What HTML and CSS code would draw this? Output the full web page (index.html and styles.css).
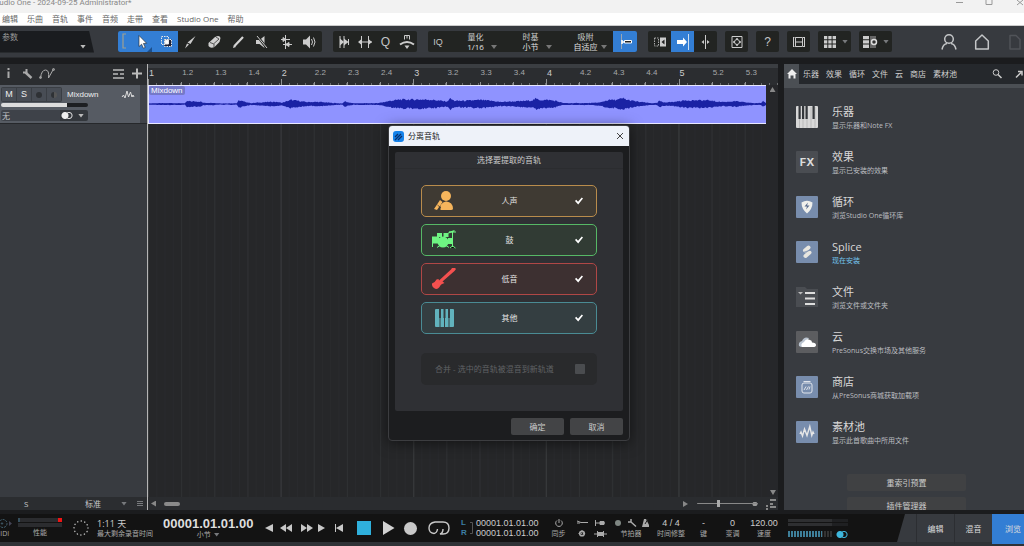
FILE: index.html
```html
<!DOCTYPE html>
<html lang="zh-CN">
<head>
<meta charset="utf-8">
<title>Studio One - 2024-09-25 Administrator*</title>
<link rel="stylesheet" href="styles.css">
</head>
<body>
<header class="titlebar">
  <span class="window-title">Studio One - 2024-09-25 Administrator*</span>
  <svg class="window-controls" viewBox="0 0 68 12" width="68" height="12" fill="none" stroke="#999"><path d="M0 2.500h7M30 -1v5.500h6V-1M61 0l6 5M67 0l-6 5"/></svg>
</header>
<nav class="menubar">
  <a href="#">编辑</a><a href="#">乐曲</a><a href="#">音轨</a><a href="#">事件</a><a href="#">音频</a><a href="#">走带</a><a href="#">查看</a><a href="#">Studio One</a><a href="#">帮助</a>
</nav>

<div class="toolbar">
  <button class="params"><span>参数</span><i class="caret"></i></button>
  <div class="group tools">
    <span class="bracket on"><svg width="12" height="20" viewBox="0 0 12 20" fill="none" stroke="#a0a090" stroke-width="1.200"><path d="M8 3H5v14h3"/></svg></span>
    <button class="tool on" aria-label="箭头"><svg viewBox="0 0 24 20"><path fill="#fff" stroke="#222" stroke-width=".6" d="M9 3.500v11l2.600-2.300 1.800 4 1.800-.8-1.800-3.900 3.200-.2z"/><path fill="#1b4f8c" d="M22 15v5h-5z"/></svg></button>
    <button class="tool on" aria-label="范围"><svg viewBox="0 0 24 20" fill="none" stroke="#e8e8e8"><path stroke-dasharray="1.500 1" d="M7.500 4.500h7v8h-7z"/><path fill="#223" d="M10.500 7.500h7v7h-7z" stroke-dasharray="1.500 1"/><path d="M11 8h3.500v4H11z" fill="#fff"/></svg></button>
    <button class="tool" aria-label="分割"><svg viewBox="0 0 24 20"><path fill="#ccc" d="M17.500 4l-5 8-3-1.500zM9 11.500l2 1-4 4z"/></svg></button>
    <button class="tool" aria-label="橡皮"><svg viewBox="0 0 24 20"><path fill="#d0d0d0" d="M12.500 5.500q5-3 6 .5l-1 4-5 5q-4 2-6-1V11z"/><path d="M8 10.500l4 1.500v3M14 5l3 2-5 4.500" stroke="#333" fill="none" stroke-width=".8"/></svg></button>
    <button class="tool" aria-label="绘制"><svg viewBox="0 0 24 20"><path stroke="#d5d5d5" stroke-width="2.200" d="M8.500 14L17 5"/><path fill="#d5d5d5" d="M7 16l.8-3 2.200 2z"/></svg></button>
    <button class="tool" aria-label="静音"><svg viewBox="0 0 24 20"><path fill="#ccc" d="M6 8h3.500l5-4v12l-5-4H6z"/><path stroke="#222422" stroke-width="2.400" d="M7 3.500l10 13"/><path stroke="#ccc" d="M7 4l10 12"/></svg></button>
    <button class="tool" aria-label="弯曲"><svg viewBox="0 0 24 20" fill="none" stroke="#ccc"><path d="M11.500 3v14M7 7.500h9M9 12.500h9"/><path fill="#ccc" d="M9 5.500l2.500 2L9 9.500zM15 10.500l-3.500 2 3.500 2z"/></svg></button>
    <button class="tool" aria-label="试听"><svg viewBox="0 0 24 20"><path fill="#ccc" d="M5 7.500h3l4-4v13l-4-4H5z"/><path stroke="#ccc" fill="none" d="M13.500 7q2 3 0 6M15.500 5.500q3 4.500 0 9"/></svg></button>
  </div>
  <div class="group narrow">
    <button class="tool" aria-label="剪切静音"><svg viewBox="0 0 24 20"><path stroke="#ccc" d="M8 4v12M12 4v12M16.500 7v6"/><path fill="#ccc" d="M8 6.500l4 3.500-4 3.500zM12 6.500l4.500 3.500-4.500 3.500z"/></svg></button>
    <button class="tool" aria-label="音频弯曲"><svg viewBox="0 0 24 20"><path stroke="#ccc" d="M8.500 4v12M15.500 4v12M6 10h13" fill="none"/><path fill="#ccc" d="M8 7.500v5L5 10zM16 7.500v5l3-2.500z"/></svg></button>
    <button class="tool glyph">Q</button>
    <button class="tool" aria-label="宏"><svg viewBox="0 0 24 20"><path fill="none" stroke="#ccc" stroke-width="2" d="M5 12.500Q12 7.500 19 12.500"/><path fill="none" stroke="#ccc" d="M9.500 7.500v-4h5v4M12 3.500v3"/><path fill="#ccc" d="M9.500 13.500h5L12 17z"/></svg></button>
  </div>
  <div class="group quant">
    <button class="iq">IQ</button>
    <label class="pick"><span>量化</span><select><option>1/16</option></select><i class="caret"></i></label>
    <label class="pick"><span>时基</span><select><option>小节</option></select><i class="caret"></i></label>
    <label class="pick"><span>吸附</span><select><option>自适应</option></select><i class="caret"></i></label>
    <button class="tool on" aria-label="吸附开关"><svg viewBox="0 0 24 20"><path stroke="#99a6b5" d="M8.500 2v15"/><path fill="none" stroke="#fff" stroke-width="1.500" d="M9 8v4M9 10h3"/><path fill="#222" stroke="#fff" d="M11.500 8.500h7v2.500h-7z"/></svg></button>
  </div>
  <div class="group follow">
    <button class="tool" aria-label="自动滚动"><svg viewBox="0 0 24 20"><path fill="none" stroke="#aaa" stroke-dasharray="1.500 1" d="M6.500 6h4v8h-4z"/><path fill="#ccc" d="M12 5.500h6v9h-6z"/><path fill="#222" d="M16.500 7.500v5L13.500 10z"/></svg></button>
    <button class="tool on" aria-label="光标跟随"><svg viewBox="0 0 24 20"><path fill="#fff" d="M6 8h6V5.500l4 4.500-4 4.500V12H6z"/><path stroke="#cde" d="M17.500 2v16"/></svg></button>
    <button class="tool" aria-label="居中"><svg viewBox="0 0 24 20"><path stroke="#ccc" d="M11.500 3v14"/><path fill="#ccc" d="M10 8v4l-2.500-2zM13 8v4l2.500-2z"/></svg></button>
  </div>
  <button class="group tool single" aria-label="聚焦"><svg viewBox="0 0 24 20" fill="none" stroke="#ccc"><path d="M7 4.500h10v11H7z"/><circle cx="12" cy="10" r="2.500"/><path stroke-width="1.500" d="M12 6v2M12 12v2M8 10h2M14 10h2"/></svg></button>
  <button class="group tool single glyph">?</button>
  <button class="group tool single" aria-label="视频"><svg viewBox="0 0 24 20" fill="none" stroke="#ccc"><path d="M8.500 5.500h7v9h-7zM8 10h8M6.500 5v10M17.500 5v10"/><path d="M6 5.500h12M6 14.500h12" stroke-dasharray="1.500 1"/></svg></button>
  <button class="group wide" aria-label="网格"><svg viewBox="0 0 24 20" fill="#ccc"><path d="M6 4h3.300v3.300H6zM10.300 4h3.300v3.300h-3.300zM14.600 4H18v3.300h-3.400zM6 8.300h3.300v3.300H6zM10.300 8.300h3.300v3.300h-3.300zM14.600 8.300H18v3.300h-3.400zM6 12.600h3.300V16H6zM10.300 12.600h3.300V16h-3.300zM14.600 12.600H18V16h-3.400z"/></svg><i class="caret dim"></i></button>
  <button class="group wide" aria-label="视图选项"><svg viewBox="0 0 24 20" fill="#ccc"><path d="M4 4h6v3.300H4zM4 8.300h6v3.300H4zM4 12.600h6V16H4z"/><path fill="#666" d="M11 4h6v12h-6z"/><circle cx="15" cy="10" r="2.500" fill="#333" stroke="#ddd" stroke-width="1.500"/></svg><i class="caret dim"></i></button>
  <div class="account">
    <svg viewBox="0 0 18 20" fill="none" stroke="#c4c6c8" stroke-width="1.500"><circle cx="9" cy="7" r="4.300"/><path d="M2 17.500q1-5.500 5-6M16 17.500q-1-5.500-5-6"/></svg>
    <svg viewBox="0 0 18 20" fill="none" stroke="#c4c6c8" stroke-width="1.500" stroke-linejoin="round"><path d="M9 3l6.300 6v8H2.700V9z"/></svg>
    <svg viewBox="0 0 18 20" fill="none" stroke="#505358" stroke-width="1.500" stroke-linejoin="round"><path d="M4 3.500h6l4 4v9.500H4z"/></svg>
  </div>
</div>

<main class="workspace">
  <section class="tracks">
    <div class="track-tools">
      <svg width="60" height="20" viewBox="0 0 60 20" fill="none" stroke="#aaa"><path stroke-width="2" d="M8.500 7.500v6.500M8.500 4v2"/><path stroke-width="2.400" d="M25.500 8.500l6 5.500"/><path stroke-width="2" d="M23 8.500h3.500V5"/><path d="M40.500 14q1-8 5-8t3 8l5-9"/><circle cx="40.500" cy="13.500" r="1"/><circle cx="53.500" cy="5.500" r="1"/></svg>
      <svg width="36" height="20" viewBox="0 0 36 20" stroke="#bbb"><path d="M2 6h11M2 10h5M9 10h4M2 14h11" stroke-width="1.500"/><path d="M21 9.500h10M26 4.500v10" stroke-width="2"/></svg>
    </div>
    <article class="track">
      <div class="track-row">
        <div class="buttons"><button>M</button><button>S</button><button aria-label="录音"><i class="dot"></i></button><button aria-label="监听"><i class="dot half"></i></button></div>
        <span class="track-name">Mixdown</span>
        <svg width="14" height="10" viewBox="0 0 14 10" fill="none" stroke="#ddd"><path d="M1 7l1.500-2L4 8l2-7 1.500 6L9.500 2l1.500 5 1-2 1 2"/></svg>
      </div>
      <input class="volume" type="range" aria-label="音量" value="76">
      <div class="output"><span>无</span><i class="stereo"></i><i class="caret"></i></div>
    </article>
    <div class="track-footer"><span>S</span><span class="size">标准</span><i class="caret dim"></i><i class="lines"></i></div>
  </section>

  <section class="timeline">
    <div class="ruler" id="ruler"></div>
    <div class="arrange">
      <div class="clip"><span>Mixdown</span><svg viewBox="0 0 618 38" preserveAspectRatio="none"><path id="wave" fill="#1a22a4"/></svg></div>
      <div class="vscroll"><i class="up"></i><i class="down"></i></div>
    </div>
    <div class="hscroll"><i class="left"></i><i class="thumb"></i><i class="right"></i><input type="range" aria-label="缩放" value="35"><svg width="14" height="12" viewBox="0 0 14 12" fill="#888"><path d="M2 7h2v2H2zM6 5h3v2H6zM2 10h2v2H2zM6 1h6v2H6zM6 8h6v2H6z"/></svg></div>
  </section>

  <aside class="browser">
    <nav class="tabs">
      <a class="home" href="#" aria-label="主页"><svg width="10" height="10" viewBox="0 0 10 10" fill="#eee"><path d="M5 0l5 5H8.500v4.500h-2v-3h-3v3h-2V5H0z"/></svg></a>
      <a href="#">乐器</a><a href="#">效果</a><a href="#">循环</a><a href="#">文件</a><a href="#">云</a><a href="#">商店</a><a href="#">素材池</a>
      <svg class="search" width="34" height="12" viewBox="0 0 34 12" fill="none" stroke="#ccc"><circle cx="6" cy="4.500" r="2.800"/><path stroke-width="1.500" d="M8 6.500l3.500 3.500M26 9.500L31 4.500M28 3.500h4v4"/></svg>
    </nav>
    <div class="browser-body">
      <a class="item" href="#"><svg viewBox="0 0 22 22"><rect width="22" height="22" rx="1" fill="#d8d8d8"/><path stroke="#aaa" stroke-width=".6" d="M3.500 1v21M7 1v21M11 1v21M15 1v21M19 1v21"/><path fill="#34373b" d="M2.500 0h2.200v13H2.500zM6 0h2.200v13H6zM9.500 0h2.200v13H9.500zM16.500 0h2.200v13h-2.200z"/></svg><span><b>乐器</b><small>显示乐器和Note FX</small></span></a>
      <a class="item" href="#"><i class="fx">FX</i><span><b>效果</b><small>显示已安装的效果</small></span></a>
      <a class="item" href="#"><svg viewBox="0 0 22 22"><rect width="22" height="22" rx="1" fill="#788dad"/><path fill="#f0f0ec" d="M5.500 6.500Q11 3 16.500 6.500 16.500 13 11 17.500 5.500 13 5.500 6.500z"/><path fill="#53678a" d="M12 6.500l-3.500 4H11L10 13.500l3.500-4H11z"/></svg><span><b>循环</b><small>浏览Studio One循环库</small></span></a>
      <a class="item splice" href="#"><svg viewBox="0 0 22 22"><rect width="22" height="22" rx="1" fill="#788dad"/><g stroke="#e8e6df" stroke-width="4" stroke-linecap="round"><path d="M9 9.500L12.500 6.500M9.500 15L13.500 11.500"/></g><path stroke="#788dad" stroke-width=".8" d="M7 11.500l8-2.500"/></svg><span><b>Splice</b><small>现在安装</small></span></a>
      <a class="item" href="#"><svg viewBox="0 0 22 22"><path fill="#4a4d52" d="M0 1h9l2 2h11v18H0z"/><path fill="#bbb" d="M2 6h5L4.500 8.500z"/><path stroke="#ddd" stroke-width="2" d="M9 7h10M9 12.500h10M9 18h10"/></svg><span><b>文件</b><small>浏览文件或文件夹</small></span></a>
      <a class="item" href="#"><svg viewBox="0 0 22 22"><rect width="22" height="22" rx="1" fill="#5c5d60"/><path fill="#b9c3cf" d="M3 15q-1-4 3-5 2-5 7-3l-6 9H5z"/><path fill="#fff" d="M6 16q-2-3 2-5 2-4 6-2 2 0 2 2.500 4 0 4 2.500 0 2-3 2z"/></svg><span><b>云</b><small>PreSonus交换市场及其他服务</small></span></a>
      <a class="item" href="#"><svg viewBox="0 0 22 22" fill="none" stroke="#dfe3ea"><rect width="22" height="22" rx="1" fill="#788dad" stroke="none"/><rect x="6" y="7" width="10" height="10" rx="2"/><path d="M7.500 5.500h7M8 14l2-3.500M10.500 14l2-3.500M13 13.500l1-3"/></svg><span><b>商店</b><small>从PreSonus商城获取加载项</small></span></a>
      <a class="item" href="#"><svg viewBox="0 0 22 22" fill="none" stroke="#e6e6e6" stroke-width="1.400"><rect width="22" height="22" rx="1" fill="#788dad" stroke="none"/><path d="M4 13l1-2 1.500 4 2-7 2.500 6.500 2.800-9 2 9 1.200-3.500 1 2"/></svg><span><b>素材池</b><small>显示此首歌曲中所用文件</small></span></a>
      <div class="actions"><button>重索引预置</button><button>插件管理器</button></div>
    </div>
  </aside>
</main>

<footer class="transport">
  <div class="dock">
    <div class="midi"><svg width="12" height="11" viewBox="0 0 12 11" fill="none" stroke="#456373"><circle cx="3" cy="5.500" r="4" stroke-dasharray="2 1"/><circle cx="2" cy="5.500" r=".7"/><path fill="#445" stroke="none" d="M9 3l3 2.500L9 8z"/></svg><small>MIDI</small></div>
    <div class="perf"><i class="bar hot"></i><i class="bar"></i><small>性能</small></div>
    <svg class="ring" viewBox="0 0 18 18" fill="none" stroke="#bbb" stroke-width="1.500" stroke-linecap="round"><circle cx="9" cy="9" r="7" stroke-dasharray="0.100 3.565"/></svg>
    <div class="remain"><b>1:11 天</b><small>最大剩余录音时间</small></div>
    <div class="clock"><b>00001.01.01.00</b><small>小节 <i class="caret dim"></i></small></div>
    <svg class="moves" viewBox="0 0 80 16" width="80" height="16" fill="#c8c8c8"><path d="M8 4v8L0 8zM21 4v8l-6-4zM27 4v8l-6-4zM36 4v8l6-4zM42 4v8l6-4zM53 4v8l7-4zM78 4v8l-7-4zM70 4h1v8h-1z"/></svg>
    <button class="stop" aria-label="停止"></button>
    <button aria-label="播放"><svg width="12" height="14" viewBox="0 0 12 14" fill="#d2d2d2"><path d="M0 0l11.500 7L0 14z"/></svg></button>
    <button class="record" aria-label="录音"></button>
    <button aria-label="循环"><svg width="22" height="16" viewBox="0 0 22 16" fill="none" stroke="#c8c8c8" stroke-width="1.400"><path d="M6 13.500Q1 13 1 8T7 2h8q6 0 6 6t-6 6h-3q3-1 3-5M6 13.500q3-.5 3.500-4.500"/></svg></button>
    <div class="locators">
      <div><em>L</em><em>R</em></div>
      <svg width="3" height="14" viewBox="0 0 3 14" fill="none" stroke="#555"><path d="M0 1.500h2.500v11H0"/></svg>
      <div><span>00001.01.01.00</span><span>00001.01.01.00</span></div>
    </div>
    <div class="cell"><svg width="12" height="10" viewBox="0 0 12 10" fill="none" stroke="#aaa"><path d="M4 2.500a3.300 3.300 0 1 0 4 0M6 1v4"/></svg><small>同步</small></div>
    <svg class="misc" width="36" height="22" viewBox="0 0 36 22" fill="none" stroke="#aaa"><path d="M1 4l4 1.500h7M1 6h3M19.500 3v6M20 6h9"/><path fill="#aaa" d="M24 4.500h4v3h-4zM22 15.500h5v3h-5z"/><circle cx="6" cy="16.500" r="2.300" stroke-width="1.600"/><path stroke-dasharray="1 1.300" d="M6 13v7M2.500 16.500h7"/><path d="M18 17h13M21.500 14v6M27.500 14v6"/></svg>
    <div class="cell metro"><svg width="36" height="10" viewBox="0 0 36 10"><circle cx="5" cy="5" r="3" fill="#7f8783"/><path stroke="#aaa" stroke-width="1.500" fill="none" d="M15 4h3V1M18 4l5 4.500"/><path fill="#aaa" d="M31 1h2l4 8h-8z"/><path stroke="#222" d="M32 6l3-5"/></svg><small>节拍器</small></div>
    <div class="cell meter"><b>4 / 4</b><small>时间修整</small></div>
    <div class="cell"><b>-</b><small>键</small></div>
    <div class="cell"><b>0</b><small>变调</small></div>
    <div class="cell tempo"><b>120.00</b><small>速度</small></div>
    <div class="levels"><i class="bar"></i><i class="bar"></i><div><i class="ticks"></i><i class="stereo blue"></i></div></div>
  </div>
  <nav class="views"><a href="#">编辑</a><a href="#">混音</a><a class="current" href="#">浏览</a></nav>
</footer>

<section class="dialog" role="dialog" aria-labelledby="dlg-title">
  <header><svg width="11" height="11" viewBox="0 0 11 11"><rect width="11" height="11" rx="3" fill="#1683ea"/><path stroke="#0a2f6b" stroke-width="1.300" d="M2 6l3-3M2 9l6-6M5 9l4-4" fill="none"/></svg><h1 id="dlg-title">分离音轨</h1><button aria-label="关闭"><svg width="8" height="8" viewBox="0 0 8 8" stroke="#444"><path d="M1 1l6 6M7 1L1 7"/></svg></button></header>
  <div class="panel">
    <h2>选择要提取的音轨</h2>
    <div class="stems">
      <label class="stem vocal"><svg viewBox="0 0 24 22"><circle cx="14" cy="6" r="5" fill="currentColor"/><path fill="currentColor" d="M8.500 20v-5q3-4 6-3.500 6 .5 6.500 7 0 1.500-2 1.500zM2 19l6-9 2.500 2L5 20z"/><path stroke="#3f3a33" stroke-width=".8" d="M5.500 15l3.500 3"/></svg><span>人声</span><input type="checkbox" checked></label>
      <label class="stem drums"><svg viewBox="0 0 24 22"><g fill="currentColor"><path d="M0 7.500h7v7H0zM5 4h5v4H5zM11.500 4h5v4h-5zM16 9h5v6h-5zM16.500 3l6-2v1.500l-6 2z"/><circle cx="11" cy="13" r="5.500"/></g><path stroke="currentColor" d="M20.500 2v16M18 19l2.500-2 3 2M.5 14v4M5 18.500l3-2M17 18.500l-3-2M17 3h7"/></svg><span>鼓</span><input type="checkbox" checked></label>
      <label class="stem bass"><svg viewBox="0 0 24 22"><path fill="currentColor" d="M0 15.500q3-1 4.500-4l2-.5.500 1.500L19 1.500 20 0h3l1 1-1.500 2-12 10.500 2 1.500q-4 1-5 4-2.500 3.500-5.500 1-2.500-2-2-5z"/></svg><span>低音</span><input type="checkbox" checked></label>
      <label class="stem other"><svg viewBox="0 0 24 22"><rect x="3" y="2" width="19" height="18" rx="1" fill="currentColor"/><path fill="#343e41" d="M7 2h2v9H7zM11.500 2h2v9h-2zM16 2h2v9h-2z"/><path stroke="#343e41" d="M8 11v9M12.500 11v9M17 11v9"/></svg><span>其他</span><input type="checkbox" checked></label>
    </div>
    <label class="merge"><span>合并 - 选中的音轨被混音到新轨道</span><input type="checkbox" disabled></label>
  </div>
  <div class="dialog-actions"><button>确定</button><button>取消</button></div>
</section>
<script src="app.js"></script>
</body>
</html>
```
FILE: styles.css
```css
* { box-sizing: border-box; }
body {
  margin: 0;
  height: 100vh;
  display: flex;
  flex-direction: column;
  overflow: hidden;
  position: relative;
  background: #1b1c1e;
  color: #c4c6c8;
  font: 8px/10px "Open Sans", "Noto Sans CJK SC", sans-serif;
}
a { color: inherit; text-decoration: none; }
button, select, input { font: inherit; color: inherit; }
button { border: 0; padding: 0; background: none; display: flex; align-items: center; justify-content: center; }
svg { display: block; flex: none; }
i, em { font-style: normal; flex: none; }
small { font-size: 7px; white-space: nowrap; }
b { font-weight: 400; white-space: nowrap; }
.caret { width: 6px; height: 4px; background: #bbb; clip-path: polygon(0 0, 100% 0, 50% 100%); }
.caret.dim { background: #77797c; }
.stereo { width: 12px; height: 7px; background: radial-gradient(circle at 4px 50%, #eee 3px, transparent 4px), radial-gradient(circle at 8px 50%, transparent 2px, #ddd 3px, transparent 4px); }
.stereo.blue { background: radial-gradient(circle at 4px 50%, #3eb7dd 3px, transparent 4px), radial-gradient(circle at 8px 50%, transparent 2px, #3eb7dd 3px, transparent 4px); }

.titlebar { flex: none; height: 13px; display: flex; justify-content: space-between; background: #f2f2f2; color: #888; overflow: hidden; }
.window-title { font: 8px/6px Roboto, sans-serif; margin-left: -8px; white-space: nowrap; }
.menubar { flex: none; height: 13px; display: flex; align-items: center; gap: 9px; padding-left: 2px; background: #fff; color: #666; border-bottom: 1px solid #ccc; }

.toolbar { flex: none; height: 32px; display: flex; align-items: center; gap: 8px; background: #373a3f; border-bottom: 1px solid #2a2c2f; }
.params { width: 94px; height: 22px; padding: 1px 8px 2px 2px; justify-content: space-between; align-items: flex-start; background: #1a1c1f; color: #999; clip-path: polygon(0 0, 89px 0, 100% 100%, 0 100%); }
.params .caret { align-self: flex-end; margin-bottom: 2px; }
.group { height: 21px; display: flex; flex: none; background: #222422; border-radius: 2px; overflow: hidden; }
.tools { margin-left: 16px; margin-right: 3px; }
.bracket { width: 12px; }
.tool { width: 24px; height: 21px; flex: none; }
.tool svg, .wide svg { width: 24px; height: 20px; }
.narrow .tool { width: 21px; }
.narrow { margin-right: 3px; }
.follow .tool, .single { width: 23px; }
.on { background: #337ed4; }
.glyph { font: 12px/20px "Liberation Sans", sans-serif; }
.quant { margin-right: 3px; }
.iq { width: 20px; font: 9px/20px "Liberation Sans", sans-serif; }
.pick { position: relative; width: 55px; padding: 1px 0; display: flex; flex-direction: column; align-items: center; color: #ccc; }
.pick select { appearance: none; border: 0; padding: 0; margin: 0; width: 100%; height: 10px; background: none; text-align: center; text-align-last: center; color: #e0e0e0; }
.pick .caret { position: absolute; right: 6px; bottom: 3px; background: #777; }
.wide { width: 33px; align-items: center; }
.wide .caret { margin-right: 3px; }
.account { flex: 1; display: flex; justify-content: flex-end; gap: 15px; overflow: hidden; }
.account svg { width: 18px; height: 20px; }

.workspace { flex: 1; min-height: 0; display: flex; padding-top: 6px; padding-bottom: 4px; }
.tracks { width: 148px; flex: none; display: flex; flex-direction: column; background: #383b40; border-right: 1px solid #b5b5b5; }
.track-tools { height: 21px; flex: none; display: flex; justify-content: space-between; background: #2b2d30; }
.track { height: 39px; flex: none; padding: 1px 19px 1px 1px; background: linear-gradient(90deg, #565b63 140px, #404349 140px); border-bottom: 1px solid #26282b; }
.track-row { display: flex; align-items: center; gap: 4px; height: 17px; color: #eee; margin-right: -12px; padding-right: 5px; }
.buttons { display: flex; gap: 1px; padding: 1px; margin-right: 1px; border-radius: 2px; background: #3a3e44; }
.buttons button { width: 14px; height: 13px; background: #484d55; font: 9px/13px "Liberation Sans", sans-serif; }
.track-name { flex: 1; font-family: "Liberation Sans", sans-serif; }
.dot { width: 6px; height: 6px; border-radius: 50%; background: #2e3135; }
.dot.half { background: linear-gradient(90deg, #2e3135 50%, #555 50%); }
input[type="range"] { appearance: none; margin: 0; height: 4px; border-radius: 2px; }
.volume { display: block; width: 87px; margin-top: 1px; background: linear-gradient(90deg, #ddd 76%, #1d1f22 76%); }
.volume::-webkit-slider-thumb { appearance: none; width: 1px; height: 1px; }
.output { display: flex; align-items: center; width: 87px; height: 11px; margin-top: 3px; padding: 0 4px 0 1px; gap: 5px; background: linear-gradient(90deg, #3e4249 59px, #33373c 59px); border-radius: 2px; }
.output span { flex: 1; }
.track-footer { height: 13px; margin-top: auto; display: flex; align-items: center; gap: 20px; padding: 0 4px 0 24px; background: #2b2d30; }
.track-footer .size { margin-left: auto; }
.track-footer i { margin-right: -10px; }
.track-footer .lines { width: 6px; height: 6px; margin-right: 0; background: repeating-linear-gradient(#77797c 0 1px, transparent 1px 2px); }

.timeline { flex: 1; min-width: 0; display: flex; flex-direction: column; background: #27282b; }
.ruler { height: 21px; flex: none; display: grid; grid-template-columns: repeat(19, 1fr); border-top: 4px solid #3b3e42; background: #2b2d30; overflow: hidden; }
.ruler span { padding-left: 1px; font: 8px/10px "Liberation Sans", sans-serif; color: #a6a8aa; background: linear-gradient(#909294, #909294) 0 100% / 1px 3px no-repeat, repeating-linear-gradient(90deg, #6a6c6e 0 1px, transparent 1px 8px) 0 100% / 100% 2px no-repeat; }
.ruler .bar-start { font-size: 9px; color: #ccc; background-size: 1px 6px, 100% 2px; }
.arrange {
  flex: 1;
  position: relative;
  background:
    linear-gradient(90deg, #37393b 1px, transparent 1px) 0 0 / calc(100% * 4 / 19) 100%,
    linear-gradient(90deg, #2f3133 1px, transparent 1px) 0 0 / calc(100% / 19) 100%,
    linear-gradient(90deg, #292a2d 1px, transparent 1px) 0 0 / calc(100% / 76) 100%,
    #262729;
}
.clip { height: 39px; margin-right: 12px; display: grid; background: #8f93ff; border: 1px solid #e8e8ff; border-width: 1px 0 1px 1px; }
.clip span, .clip svg { grid-area: 1 / 1; }
.clip span { justify-self: start; align-self: start; padding: 0 2px; font: 8px/9px "Liberation Sans", sans-serif; color: #fff; background: #7579c9; border-radius: 2px; }
.clip svg { width: 100%; height: 37px; }
.vscroll { position: absolute; top: 0; right: 0; bottom: 0; width: 11px; display: flex; flex-direction: column; align-items: center; justify-content: space-between; padding: 2px 0; background: #26272a; }
.up, .down { width: 6px; height: 5px; background: #888; clip-path: polygon(50% 0, 100% 100%, 0 100%); }
.down { transform: rotate(180deg); }
.hscroll { height: 13px; flex: none; display: flex; align-items: center; padding: 0 0 0 3px; background: #2a2c2f; }
.left, .right { width: 5px; height: 6px; background: #888; clip-path: polygon(100% 0, 100% 100%, 0 50%); }
.right { transform: rotate(180deg); margin-left: auto; margin-right: 9px; }
.thumb { width: 16px; height: 4px; margin-left: 8px; border-radius: 2px; background: #8a8a8a; }
.hscroll input { width: 61px; background: linear-gradient(#888, #888) 0 50% / 100% 1px no-repeat, radial-gradient(circle at 58px 50%, #999 2px, transparent 3px); }
.hscroll input::-webkit-slider-thumb { appearance: none; width: 3px; height: 7px; background: #aaa; }
.hscroll svg { margin-left: 6px; }

.browser { width: 241px; flex: none; margin-left: 5px; display: flex; flex-direction: column; background: #383b40; border-left: 1px solid #1b1c1e; overflow: hidden; }
.tabs { height: 20px; flex: none; display: flex; align-items: center; gap: 7px; background: #25282c; white-space: nowrap; }
.home { width: 15px; height: 20px; display: grid; place-items: center; background: #4b4f54; }
.tabs a + a { color: #d0d0d0; }
.home + a { margin-left: -3px; }
.search { margin-left: auto; }
.browser-body { flex: 1; min-height: 0; overflow: hidden; padding: 17px 58px 0 12px; border-top: 4px solid #4b4f54; }
.item { display: flex; gap: 14px; height: 45px; align-items: flex-start; }
.item > svg, .fx { width: 22px; height: 22px; margin-top: 1px; flex: none; }
.fx { display: grid; place-items: center; background: #4a4d52; border-radius: 1px; font: bold 11px/12px Inter, sans-serif; color: #ddd; }
.item span { display: flex; flex-direction: column; gap: 3px; }
.item b { font-size: 11px; line-height: 13px; color: #d8d8d8; }
.item small { line-height: 10px; color: #bcbec0; }
.item.splice small { color: #73c2ec; }
.actions { display: grid; gap: 6px; padding: 9px 0 0 51px; }
.actions button { height: 17px; background: #404143; border-radius: 2px; color: #ccc; }

.transport { height: 32px; flex: none; display: flex; background: #373a3f; border-bottom: 4px solid #2f3236; }
.dock { flex: 1; min-width: 0; height: 28px; display: flex; align-items: center; background: #131313; color: #aaa; clip-path: polygon(0 0, 100% 0, calc(100% - 8px) 100%, 0 100%); overflow: hidden; }
.dock > * { flex: none; }
.midi { width: 18px; display: flex; flex-direction: column; }
.midi small { margin-left: -6px; }
.perf { width: 44px; display: grid; gap: 1px; justify-items: center; }
.bar { width: 100%; height: 4px; background: #2b2c2f; }
.hot { background: linear-gradient(90deg, #37505e 2px, #2b2c2f 2px 40px, #f01414 40px); }
.ring { width: 18px; height: 18px; margin-left: 10px; }
.remain { display: grid; margin-left: 7px; width: 67px; }
.remain b { font-size: 9px; line-height: 11px; color: #ccc; }
.clock { width: 90px; margin-left: -1px; display: grid; justify-items: center; }
.clock b { font: bold 13px/13px "Liberation Sans", sans-serif; color: #ddd; }
.clock small { display: flex; align-items: center; gap: 3px; line-height: 9px; }
.moves { margin-left: 12px; }
.stop { width: 14px; height: 14px; margin: 0 12px 0 12px; background: #2fb0dc; }
.record { width: 13px; height: 13px; margin: 0 11px 0 9px; border-radius: 50%; background: #c8c8c8; }
.locators { display: flex; align-items: center; gap: 3px; margin-left: 11px; font: 9px/10px "Liberation Sans", sans-serif; color: #ccc; }
.locators div { display: grid; }
.locators em { width: 6px; font-size: 8px; font-weight: 700; color: #3d7fa6; }
.locators span { width: 60px; }
.cell { width: 29px; display: grid; gap: 1px; justify-items: center; }
.cell b { font: 9px/10px "Liberation Sans", sans-serif; color: #ccc; }
.locators + .cell { margin-left: 8px; }
.misc { margin-left: 3px; }
.metro { width: 38px; }
.meter { width: 42px; }
.meter + .cell { margin-left: -3px; }
.tempo { width: 34px; }
.levels { width: 60px; margin-left: 7px; display: grid; gap: 1px; }
.levels .bar { height: 3px; background: linear-gradient(90deg, #2e2f31 44px, #1f2022 44px); }
.levels div { display: flex; align-items: center; justify-content: space-between; margin-top: 4px; }
.ticks { width: 45px; height: 6px; background: repeating-linear-gradient(90deg, transparent 0 2px, #131313 2px 3px), linear-gradient(90deg, #3e7f99 34px, #333 34px); }
.views { display: flex; height: 30px; margin-left: 11px; }
.views a { width: 38px; display: grid; place-items: center; border-left: 1px solid #2c2e32; color: #ddd; }
.views .current { width: 32px; padding-left: 10px; background: #337ed4; border: 0; white-space: nowrap; overflow: hidden; }

.dialog { position: absolute; left: 388px; top: 125px; width: 242px; display: flex; flex-direction: column; background: #1c1d1f; border: 1px solid #3c3d40; border-radius: 4px; overflow: hidden; box-shadow: 0 2px 14px #0008; }
.dialog header { height: 20px; display: flex; align-items: center; gap: 4px; padding: 0 5px 0 4px; background: #eef2f9; color: #222; }
.dialog h1, .dialog h2 { margin: 0; font-size: 8px; font-weight: 400; }
.dialog header button { margin-left: auto; }
.panel { margin: 6px 6px 7px; padding-bottom: 26px; background: #2f3034; border-radius: 2px; }
.dialog h2 { height: 17px; display: grid; place-items: center; color: #ccc; border-bottom: 1px solid #2b2c2f; }
.stems { display: grid; gap: 7px; padding: 16px 26px 0; }
.stem { height: 32px; display: flex; align-items: center; justify-content: space-between; padding: 0 13px 0 10px; border: 1px solid currentColor; border-radius: 5px; }
.stem svg { width: 24px; height: 22px; }
.stem span { flex: 1; margin-right: 12px; color: #e4e4e4; text-align: center; }
.vocal { color: #f6b55c; border-color: #b98c4c; background: #3f3a33; }
.drums { color: #6ef582; border-color: #56b866; background: #313b34; }
.bass { color: #f4504f; border-color: #b04746; background: #3d3031; }
.other { color: #61b3bd; border-color: #4a8b94; background: #343e41; }
.dialog input { appearance: none; margin: 0; width: 10px; height: 10px; background: #4a4c4f; border-radius: 1px; }
.dialog input:checked { width: 8px; height: 8px; background: #fff; clip-path: polygon(0 50%, 15% 35%, 38% 60%, 85% 5%, 100% 20%, 40% 95%); }
.merge { height: 32px; display: flex; align-items: center; justify-content: space-between; margin: 19px 26px 0; padding: 0 12px 0 14px; border-radius: 5px; background: #292a2c; color: #606265; }
.dialog-actions { display: flex; justify-content: flex-end; gap: 6px; padding: 0 6px 5px; }
.dialog-actions button { width: 53px; height: 17px; background: #434446; border-radius: 2px; color: #ccc; }
```
FILE: app.js
```js
const ruler = document.getElementById("ruler");
for (let beat = 0; beat < 19; beat++) {
  const bar = Math.floor(beat / 4) + 1;
  const part = beat % 4;
  const mark = document.createElement("span");
  if (part === 0) mark.className = "bar-start";
  mark.textContent = part === 0 ? bar : bar + "." + (part + 1);
  ruler.append(mark);
}

// Peak levels of the clip as [position, level] pairs.
const peaks = [[0,.9],[23,1.2],[36,.9],[38,3.5],[52,3],[54,1.5],[65,1.5],[68,.9],[88,.9],[90,4.5],[95,3],[102,1.2],[113,2],[125,3],[133,1.5],[142,5],[149,4],[157,2.5],[172,2.5],[190,.9],[194,.9],[196,3.5],[200,1.8],[205,.9],[230,1.2],[242,4],[252,5.5],[280,5.5],[292,4],[299,3],[301,7],[306,4],[317,4],[332,5],[342,4],[352,2.5],[372,3.5],[384,4.5],[387,6.5],[392,5],[400,5],[407,4],[415,1.2],[442,1.2],[452,2],[460,5],[468,5],[475,7],[479,5],[492,2.5],[502,1.2],[509,1.2],[511,4],[515,2],[525,2.5],[537,4.5],[562,4.5],[568,3],[577,2.5],[587,3.5],[597,2],[606,1.2],[613,1.2],[615,4],[618,1]];
const level = x => {
  const n = peaks.findIndex(p => p[0] >= x);
  if (n < 1) return peaks[0][1];
  const [x0, a] = peaks[n - 1], [x1, b] = peaks[n];
  return a + (b - a) * (x - x0) / (x1 - x0);
};
const jitter = n => {
  const v = Math.sin(n * 12.9898) * 43758.5453;
  return .65 + .35 * (v - Math.floor(v));
};
const upper = [], lower = [];
for (let x = 0; x <= 618; x++) {
  const h = level(x);
  upper.push(x + " " + (18.5 - h * jitter(x)).toFixed(1));
  lower.unshift(x + " " + (18.5 + h * jitter(x + 900)).toFixed(1));
}
document.getElementById("wave").setAttribute("d", "M" + upper.concat(lower).join("L") + "Z");
```
